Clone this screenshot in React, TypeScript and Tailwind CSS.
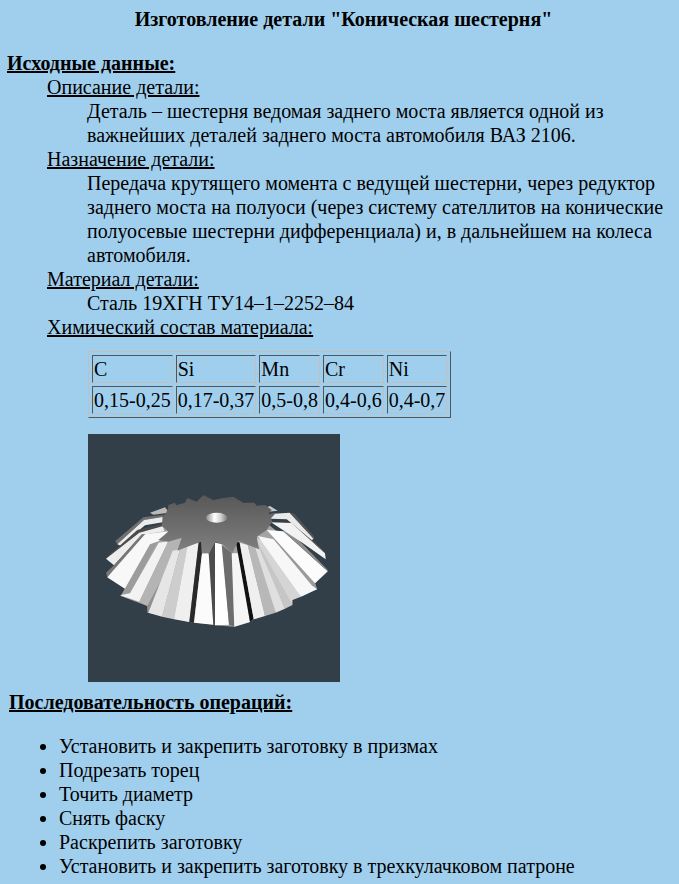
type Pt = [number, number];
const L = (...p: Pt[]) => p.map(([x, y]) => `${(12 + x / 3).toFixed(1)},${(56 + y / 3).toFixed(1)}`).join(" ");
const R = (...p: Pt[]) => p.map(([x, y]) => `${(127 + x / 3).toFixed(1)},${(56 + y / 3).toFixed(1)}`).join(" ");

const base = [
  L([22, 262], [135, 133], [205, 100], [345, 100], [345, 404], [268, 396], [145, 368], [142, 348], [62, 318], [75, 296]),
].join(" ");
const baseRight = R([0, 100], [155, 100], [338, 244], [300, 280], [306, 298], [232, 330], [232, 345], [116, 388], [105, 396], [58, 410], [0, 406]);

const faces: [string, string][] = [
  // back teeth, left
  ["#b9b9b9", L([150, 68], [195, 52], [208, 68], [160, 74])],
  ["#6f6f6f", L([46, 153], [130, 82], [190, 74], [190, 80], [132, 90], [52, 163])],
  ["#ececec", L([52, 163], [132, 90], [192, 80], [192, 96], [135, 106], [62, 167])],
  ["#4a4a4a", L([22, 200], [112, 120], [190, 100], [190, 108], [118, 128], [20, 208])],
  ["#ededed", L([18, 206], [118, 128], [190, 108], [192, 124], [125, 135], [42, 226])],
  ["#777777", L([42, 226], [125, 133], [140, 133], [22, 262], [18, 248])],
  // left front
  ["#f8f8f8", L([22, 262], [135, 133], [205, 124], [178, 152], [150, 165], [75, 296])],
  ["#9c9c9c", L([75, 296], [150, 163], [172, 155], [128, 240], [90, 310], [62, 318])],
  ["#f2f2f2", L([60, 316], [90, 310], [176, 158], [205, 154], [118, 335])],
  ["#b4b4b4", L([118, 335], [205, 154], [245, 145], [236, 182], [142, 348])],
  ["#8f8f8f", L([142, 348], [232, 182], [245, 178], [196, 300], [150, 368], [142, 368])],
  ["#e6e6e6", L([145, 368], [218, 182], [240, 178], [186, 380])],
  ["#cdcdcd", L([186, 380], [240, 178], [262, 170], [222, 388])],
  ["#efefef", L([222, 388], [262, 170], [296, 155], [268, 396])],
  ["#2a2a2a", L([268, 396], [296, 155], [306, 155], [306, 190], [282, 398])],
  // centre
  ["#fbfbfb", L([282, 398], [306, 190], [328, 190], [340, 404])],
  ["#4c4c4c", L([326, 190], [345, 155], [362, 158], [360, 404], [340, 404])],
  ["#ffffff", R([0, 158], [22, 162], [42, 404], [0, 406])],
  ["#6d6d6d", R([20, 165], [52, 190], [58, 410], [42, 404])],
  ["#f5f5f5", R([50, 190], [72, 190], [105, 396], [58, 410])],
  ["#111111", R([62, 152], [74, 158], [116, 386], [105, 396])],
  // right front
  ["#efefef", R([74, 158], [98, 165], [150, 378], [116, 388])],
  ["#b8b8b8", R([98, 165], [120, 172], [182, 368], [150, 378])],
  ["#dfdfdf", R([120, 172], [136, 178], [210, 356], [182, 368])],
  ["#c6c6c6", R([118, 142], [140, 178], [232, 345], [210, 356])],
  ["#d5d5d5", R([118, 140], [158, 160], [258, 320], [232, 330], [232, 345])],
  ["#f7f7f7", R([128, 138], [176, 148], [306, 298], [258, 320])],
  ["#9a9a9a", R([155, 122], [175, 130], [300, 280], [306, 298], [290, 286])],
  ["#fcfcfc", R([155, 120], [205, 124], [338, 244], [300, 280])],
  ["#8d8d8d", R([205, 124], [222, 120], [336, 238], [338, 244])],
  ["#f2f2f2", R([168, 97], [230, 99], [330, 190], [332, 208], [262, 158])],
  ["#666666", R([230, 99], [240, 100], [326, 184], [330, 190])],
  ["#e9e9e9", R([165, 72], [224, 68], [296, 146], [290, 150], [215, 88], [168, 86])],
  ["#555555", R([224, 68], [236, 70], [298, 140], [296, 146])],
  ["#c6c6c6", R([145, 55], [165, 48], [188, 62], [155, 66])],
];

const disc = [
  L([205, 45], [225, 38], [228, 46], [255, 38], [262, 24], [290, 35], [310, 15], [340, 30]),
  R([25, 24], [55, 20], [85, 38], [118, 38], [125, 47], [150, 45], [170, 60], [160, 72], [180, 72], [168, 85], [172, 97], [168, 100], [155, 120], [125, 140], [132, 178], [100, 165], [70, 152], [52, 190], [25, 165], [0, 155]),
  L([328, 190], [305, 190], [303, 155], [262, 170], [232, 182], [245, 143], [205, 155], [175, 150], [205, 125], [185, 108], [188, 78], [198, 70], [205, 52]),
].join(" ");

function Gear() {
  return (
    <svg width="252" height="248" viewBox="0 0 252 248" className="block">
      <defs>
        <linearGradient id="disc" x1="0" y1="0" x2="0" y2="1">
          <stop offset="0" stopColor="#585858" />
          <stop offset="1" stopColor="#808080" />
        </linearGradient>
        <linearGradient id="hole" x1="0" y1="0" x2="1" y2="0">
          <stop offset="0" stopColor="#8a8a8a" />
          <stop offset="0.4" stopColor="#ffffff" />
          <stop offset="0.7" stopColor="#d0d0d0" />
          <stop offset="1" stopColor="#777777" />
        </linearGradient>
      </defs>
      <rect width="252" height="248" fill="#323e48" />
      <polygon points={base} fill="#a4a4a4" />
      <polygon points={baseRight} fill="#a4a4a4" />
      {faces.map(([fill, points], i) => (
        <polygon key={i} points={points} fill={fill} />
      ))}
      <polygon points={disc} fill="url(#disc)" />
      <ellipse cx="128.7" cy="83.7" rx="10.7" ry="5" fill="url(#hole)" />
    </svg>
  );
}

const heads = ["C", "Si", "Mn", "Cr", "Ni"];
const vals = ["0,15-0,25", "0,17-0,37", "0,5-0,8", "0,4-0,6", "0,4-0,7"];
const ops = [
  "Установить и закрепить заготовку в призмах",
  "Подрезать торец",
  "Точить диаметр",
  "Снять фаску",
  "Раскрепить заготовку",
  "Установить и закрепить заготовку в трехкулачковом патроне",
];

const cell = "border border-t-[#555555] border-l-[#555555] border-r-[#c0c0c0] border-b-[#c0c0c0] p-[1px] text-left font-normal";

export default function App() {
  return (
    <div className="h-[884px] overflow-hidden bg-[#a0cfee] pl-[7px] pt-[7px] text-[20px] leading-6 text-black [font-family:'Liberation_Serif',serif]">
      <div className="pl-[1px] text-center font-bold">Изготовление детали "Коническая шестерня"</div>
      <div className="mt-5 font-bold"><u>Исходные данные:</u></div>
      <div className="pl-10">
        <div><u>Описание детали:</u></div>
        <div className="pl-10">Деталь – шестерня ведомая заднего моста является одной из важнейших деталей заднего моста автомобиля ВАЗ 2106.</div>
        <div><u>Назначение детали:</u></div>
        <div className="pl-10">Передача крутящего момента с ведущей шестерни, через редуктор заднего моста на полуоси (через систему сателлитов на конические полуосевые шестерни дифференциала) и, в дальнейшем на колеса автомобиля.</div>
        <div><u>Материал детали:</u></div>
        <div className="pl-10">Сталь 19ХГН ТУ14–1–2252–84</div>
        <div><u>Химический состав материала:</u></div>
        <div className="pl-[41px] pt-[12px]">
          <table className="border-separate border-spacing-[3px] border border-t-[#c0c0c0] border-l-[#c0c0c0] border-r-[#555555] border-b-[#555555]">
            <tbody>
              <tr>{heads.map((h) => <td key={h} className={cell}>{h}</td>)}</tr>
              <tr>{vals.map((v) => <td key={v} className={cell}>{v}</td>)}</tr>
            </tbody>
          </table>
          <div className="mt-[16px]"><Gear /></div>
        </div>
      </div>
      <div className="ml-[2px] mt-[8px] font-bold"><u>Последовательность операций:</u></div>
      <ul className="mt-[20px] list-disc pl-[52px]">
        {ops.map((o) => <li key={o}>{o}</li>)}
      </ul>
    </div>
  );
}
